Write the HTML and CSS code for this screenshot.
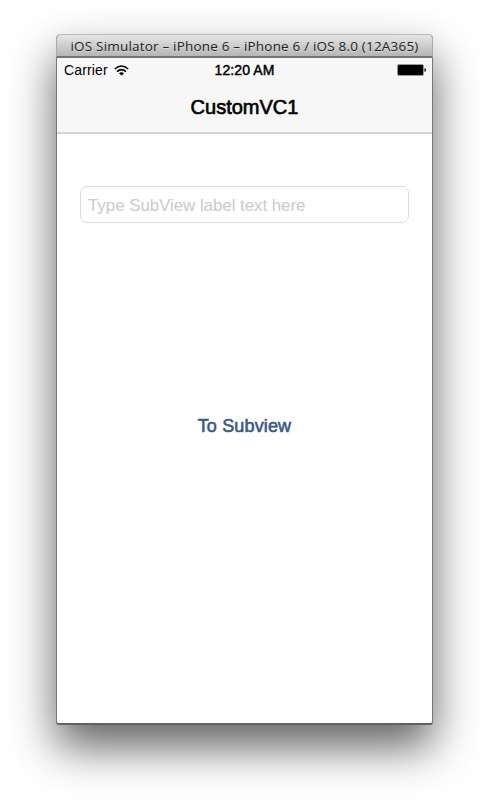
FILE: index.html
```html
<!DOCTYPE html>
<html lang="en">
<head>
<meta charset="utf-8">
<title>iOS Simulator</title>
<link rel="stylesheet" href="styles.css">
</head>
<body>
<main class="window">
  <header class="titlebar"><span class="window-title">iOS Simulator – iPhone 6 – iPhone 6 / iOS 8.0 (12A365)</span></header>
  <section class="screen">
    <div class="navigation">
      <div class="status">
        <div class="network">
          <span class="carrier">Carrier</span>
          <svg class="wifi" width="15" height="11" viewBox="0 0 15 11" fill="none" stroke="#000" stroke-width="1.6"><path d="M.8 4Q7.500-2 14.200 4M3 6.700Q7.500 2.700 12 6.700"/><path d="M7.500 10.500 5 8.200Q7.500 6.400 10 8.200Z" fill="#000" stroke="none"/></svg>
        </div>
        <span class="time">12:20 AM</span>
        <svg class="battery" width="30" height="12" viewBox="0 0 30 12"><rect x=".5" y=".5" width="26" height="11" rx="1.5" fill="#000" stroke="#999"/><path d="M27.5 4Q29 4.300 29 6T27.500 8Z"/></svg>
      </div>
      <h1 class="heading">CustomVC1</h1>
    </div>
    <div class="content">
      <input class="field" type="text" placeholder="Type SubView label text here" aria-label="SubView label text">
      <button class="link" type="button"><span class="link-text">To Subview</span></button>
    </div>
  </section>
</main>
</body>
</html>
```
FILE: styles.css
```css
* { box-sizing: border-box; }
body {
  margin: 0;
  height: 803px;
  padding: 34px 56px 0;
  overflow: hidden;
  background: #fff;
  font-family: "Liberation Sans", Arial, sans-serif;
}
.window {
  width: 377px;
  height: 691px;
  border: 1px solid #777;
  border-top: 0;
  border-bottom: 2px solid #626262;
  border-radius: 5px 5px 3px 3px;
  background: #fff;
  box-shadow: 0 22px 45px rgba(0, 0, 0, .62);
}
.titlebar {
  height: 24px;
  margin: 0 -1px;
  padding-top: 1px;
  display: flex;
  align-items: center;
  justify-content: center;
  border: 1px solid #aaa;
  border-top-color: #bbb;
  border-bottom: 2px solid #747474;
  border-radius: 5px 5px 0 0;
  background: linear-gradient(#e6e6e6, #b5b5b5);
}
.window-title {
  color: #222;
  font: 13.5px/20px "Open Sans", "Noto Sans", sans-serif;
  letter-spacing: .19px;
  white-space: nowrap;
  text-shadow: 0 1px rgba(255, 255, 255, .35);
}
.navigation {
  height: 76px;
  border-bottom: 2px solid #d5d5d5;
  background: #f7f7f7;
}
.status {
  height: 24px;
  padding: 0 5px 0 7px;
  display: grid;
  grid-template-columns: 1fr auto 1fr;
  align-items: center;
  font-size: 14px;
  line-height: 24px;
}
.network { display: flex; align-items: center; gap: 6px; }
.carrier { letter-spacing: .15px; }
.time { margin-right: 2px; font-size: 14px; letter-spacing: .1px; -webkit-text-stroke: .45px #000; }
.battery { justify-self: end; }
.heading {
  margin: 11px 0 0;
  text-align: center;
  font-size: 20px;
  line-height: 28px;
  font-weight: 400;
  -webkit-text-stroke: .65px #000;
}
.content {
  padding: 52px 23px 0;
  display: flex;
  flex-direction: column;
  align-items: center;
}
.field {
  width: 329px;
  height: 37px;
  padding: 2px 7px 0;
  border: 1px solid #dcdcdc;
  border-radius: 7px;
  background: #fff;
  font: 17px "Liberation Sans", Arial, sans-serif;
  letter-spacing: -.09px;
  outline: 0;
}
.field::placeholder { color: #cacacc; opacity: 1; }
.link {
  margin-top: 187px;
  padding: 0;
  border: 0;
  background: none;
  color: #3b5889;
  font: 18px/32px "Liberation Sans", Arial, sans-serif;
  letter-spacing: .15px;
  -webkit-text-stroke: .6px #3b5889;
}
```
